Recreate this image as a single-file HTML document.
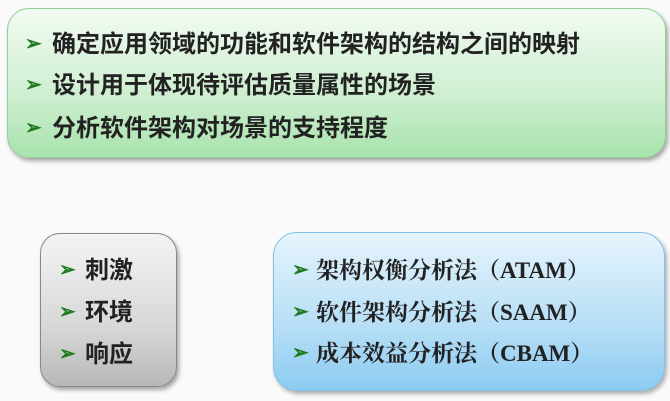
<!DOCTYPE html><html><head><meta charset="utf-8"><style>
body{margin:0;width:670px;height:401px;background:#fafafa;position:relative;overflow:hidden;font-family:"Liberation Sans","Noto Sans CJK SC",sans-serif}
.box{position:absolute;box-sizing:border-box}
.g{left:7px;top:8px;width:659px;height:150px;border-radius:22px;border:1px solid #8fcf95;background:linear-gradient(#f2fbf2,#cdeecf 60%,#a8e3ad);box-shadow:2px 3px 4px rgba(0,0,0,.35)}
.gr{left:40px;top:233px;width:137px;height:154px;border-radius:20px;border:1px solid #888;background:linear-gradient(#f4f4f4,#d8d8d8 60%,#b8b8b8);box-shadow:2px 3px 4px rgba(0,0,0,.35)}
.b{left:273px;top:232px;width:392px;height:159px;border-radius:24px;border:1px solid #7fc0e8;background:linear-gradient(#e6f4fc,#b6def6 60%,#8ccbf1);box-shadow:2px 3px 4px rgba(0,0,0,.3)}
.l{position:absolute;white-space:nowrap;color:#222;font-weight:bold;line-height:30px}
.l i{font-style:normal;color:#1e7a1e;font-size:20px;position:absolute;left:0;top:-1px}
.s{font-family:"Liberation Serif","Noto Serif CJK SC",serif;font-weight:bold}
</style></head><body>
<div class="box g"></div>
<div class="box gr"></div>
<div class="box b"></div>
<div class="l" style="left:25px;top:30px;font-size:24px;padding-left:27px"><i>➢</i>确定应用领域的功能和软件架构的结构之间的映射</div>
<div class="l" style="left:25px;top:71px;font-size:24px;padding-left:27px"><i>➢</i>设计用于体现待评估质量属性的场景</div>
<div class="l" style="left:25px;top:114px;font-size:24px;padding-left:27px"><i>➢</i>分析软件架构对场景的支持程度</div>
<div class="l" style="left:59px;top:256px;font-size:24px;padding-left:26px"><i>➢</i>刺激</div>
<div class="l" style="left:59px;top:298px;font-size:24px;padding-left:26px"><i>➢</i>环境</div>
<div class="l" style="left:59px;top:340px;font-size:24px;padding-left:26px"><i>➢</i>响应</div>
<div class="l s" style="left:292px;top:256px;font-size:23px;padding-left:24px"><i>➢</i>架构权衡分析法（ATAM）</div>
<div class="l s" style="left:292px;top:298px;font-size:23px;padding-left:24px"><i>➢</i>软件架构分析法（SAAM）</div>
<div class="l s" style="left:292px;top:339px;font-size:23px;padding-left:24px"><i>➢</i>成本效益分析法（CBAM）</div>
</body></html>
